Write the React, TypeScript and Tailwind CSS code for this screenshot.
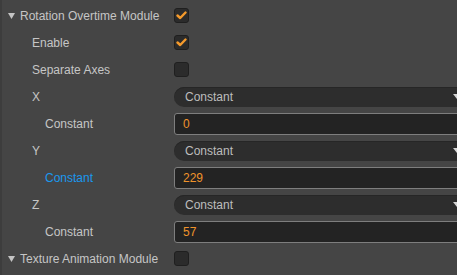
const font = { fontFamily: '"Liberation Sans", Arial, sans-serif' };

function Check({ checked }: { checked?: boolean }) {
  return (
    <div className="flex h-[15px] w-[15px] items-center justify-center rounded-[3px] border border-[#1f1f1f] bg-[#2b2b2b]">
      {checked && (
        <svg width="11" height="9" viewBox="0 0 11 9">
          <path d="M1.5 4.5 L4.2 7 L9.5 1.5" fill="none" stroke="#f49a2c" strokeWidth="2.4" strokeLinecap="round" strokeLinejoin="round" />
        </svg>
      )}
    </div>
  );
}

function Caret() {
  return (
    <svg width="7" height="6" viewBox="0 0 7 6" className="shrink-0">
      <path d="M0 0 H7 L3.5 6 Z" fill="#c4c4c4" />
    </svg>
  );
}

function Select() {
  return (
    <div className="flex h-[20px] w-[294px] items-center justify-between rounded-full bg-[#2d2d2d] pl-[11px] pr-[7px] text-[12px] text-[#bdbdbd] shadow-[inset_0_1px_0_#262626]">
      <span>Constant</span>
      <svg width="8" height="5" viewBox="0 0 8 5">
        <path d="M0 0 H8 L4 5 Z" fill="#d6d6d6" />
      </svg>
    </div>
  );
}

function NumInput({ value }: { value: string }) {
  return (
    <div className="flex h-[22px] w-[294px] items-center rounded-[3px] border border-[#7e7e7e] bg-[#232323] pl-[8px] text-[12px] text-[#f0932b]">
      {value}
    </div>
  );
}

function Row({ label, indent, blue, children }: { label: React.ReactNode; indent: number; blue?: boolean; children?: React.ReactNode }) {
  return (
    <div className="flex h-[27px] items-center">
      <div
        className={`flex w-[172px] shrink-0 items-center text-[12px] ${blue ? "text-[#1a98ee]" : "text-[#c6c6c6]"}`}
        style={{ paddingLeft: indent }}
      >
        {label}
      </div>
      {children}
    </div>
  );
}

export default function App() {
  return (
    <div className="h-[275px] w-[457px] overflow-hidden border-l-2 border-[#3d3d3d] bg-[#454545]" style={font}>
      <div className="w-[480px] pt-[2px]">
        <Row indent={6} label={<span className="flex items-center gap-[5px]"><Caret />Rotation Overtime Module</span>}>
          <Check checked />
        </Row>
        <Row indent={30} label="Enable">
          <Check checked />
        </Row>
        <Row indent={30} label="Separate Axes">
          <Check />
        </Row>
        <Row indent={30} label="X">
          <Select />
        </Row>
        <Row indent={43} label="Constant">
          <NumInput value="0" />
        </Row>
        <Row indent={30} label="Y">
          <Select />
        </Row>
        <Row indent={43} label="Constant" blue>
          <NumInput value="229" />
        </Row>
        <Row indent={30} label="Z">
          <Select />
        </Row>
        <Row indent={43} label="Constant">
          <NumInput value="57" />
        </Row>
        <Row indent={6} label={<span className="flex items-center gap-[5px]"><Caret />Texture Animation Module</span>}>
          <Check />
        </Row>
      </div>
    </div>
  );
}
